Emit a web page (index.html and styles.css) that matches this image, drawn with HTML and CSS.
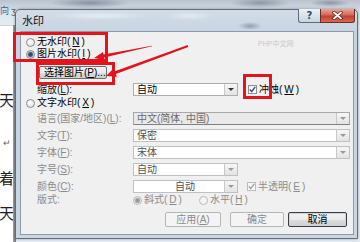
FILE: index.html
```html
<!DOCTYPE html>
<html lang="zh-CN">
<head>
<meta charset="utf-8">
<title>水印</title>
<link rel="stylesheet" href="styles.css">
</head>
<body>
<div class="app">
  <div class="ribbon">
    <span class="rb-text">向</span><span class="rb-glyph">ʒ</span>
  </div>
  <div class="doc">
    <div class="margin">
      <span class="ch c1">天</span>
      <span class="ch c2">↵</span>
      <span class="ch c3">着</span>
      <span class="ch c4">天</span>
    </div>
    <div class="edge"></div>
    <div class="behind"></div>
  </div>
</div>

<div class="dialog">
  <div class="titlebar">
    <span class="title">水印</span>
    <div class="caption">
      <span class="cap help">?</span>
      <span class="cap close">
        <svg width="11" height="9" viewBox="0 0 11 9">
          <path d="M2 1.5 L9 7.5 M9 1.5 L2 7.5" stroke="#5b2320" stroke-width="3.4" stroke-linecap="round"/>
          <path d="M2 1.5 L9 7.5 M9 1.5 L2 7.5" stroke="#ffffff" stroke-width="1.9" stroke-linecap="round"/>
        </svg>
      </span>
    </div>
  </div>
  <div class="client">
    <span class="wm">PHP中文网</span>
    <label class="opt r1"><span class="radio"></span>无水印(<u>N</u>)</label>
    <label class="opt r2"><span class="radio on"></span>图片水印(<u>I</u>)</label>
    <span class="btn pick">选择图片(<u>P</u>)...</span>
    <div class="form pic-form">
      <span class="lbl en">缩放(<u>L</u>):</span>
      <div class="ctl">
        <span class="combo narrow"><span class="val">自动</span><span class="arr"></span></span>
        <label class="chk"><span class="box"><svg width="7" height="7" viewBox="0 0 7 7"><path d="M0.8 3.6 L2.7 5.6 L6.2 0.9" fill="none" stroke="#2d4f8e" stroke-width="1.4"/></svg></span>冲蚀(<u>W</u>)</label>
      </div>
    </div>
    <label class="opt r3"><span class="radio"></span>文字水印(<u>X</u>)</label>
    <div class="form text-form">
      <span class="lbl">语言(国家/地区)(<u>L</u>):</span>
      <div class="ctl"><span class="combo wide lang"><span class="val">中文(简体, 中国)</span><span class="arr"></span></span></div>
      <span class="lbl">文字(<u>T</u>):</span>
      <div class="ctl"><span class="combo wide dis"><span class="val">保密</span><span class="arr"></span></span></div>
      <span class="lbl">字体(<u>F</u>):</span>
      <div class="ctl"><span class="combo wide dis"><span class="val">宋体</span><span class="arr"></span></span></div>
      <span class="lbl">字号(<u>S</u>):</span>
      <div class="ctl"><span class="combo narrow dis"><span class="val">自动</span><span class="arr"></span></span></div>
      <span class="lbl">颜色(<u>C</u>):</span>
      <div class="ctl">
        <span class="combo narrow dis"><span class="val center">自动</span><span class="arr"></span></span>
        <label class="chk dis"><span class="box"><svg width="7" height="7" viewBox="0 0 7 7"><path d="M0.8 3.6 L2.7 5.6 L6.2 0.9" fill="none" stroke="#a3a3a3" stroke-width="1.4"/></svg></span>半透明(<u>E</u>)</label>
      </div>
    </div>
    <div class="form lay">
      <span class="lbl">版式:</span>
      <div class="ctl">
        <label class="opt dis"><span class="radio on dis"></span>斜式(<u>D</u>)</label>
        <label class="opt dis horiz"><span class="radio dis"></span>水平(<u>H</u>)</label>
      </div>
    </div>
    <div class="actions">
      <span class="btn dis apply">应用(<u>A</u>)</span>
      <span class="btn dis ok">确定</span>
      <span class="btn def cancel">取消</span>
    </div>
  </div>
</div>

<svg class="annot" width="360" height="242" viewBox="0 0 360 242">
  <g fill="none" stroke="#e2141d" stroke-width="3">
    <rect x="14.5" y="33.5" width="92" height="27"/>
    <rect x="37.5" y="63.5" width="76" height="20"/>
    <rect x="244.5" y="75.5" width="26" height="22"/>
  </g>
  <g fill="#e2141d">
    <polygon points="94,58 103,52.1 103.5,54.5 151.9,45.7 152.1,46.3 104.1,57.5 104.6,59.9"/>
    <polygon points="106,76 113.8,68.3 114.9,71.2 187.7,45.1 188.3,46.9 115.9,74 116.9,76.8"/>
  </g>
</svg>
</body>
</html>
```

FILE: styles.css
```css
* { box-sizing: border-box; }
html, body { margin: 0; padding: 0; }
body {
  width: 360px;
  height: 242px;
  overflow: hidden;
  position: relative;
  font-family: "Liberation Sans", "Noto Sans CJK SC", sans-serif;
  font-size: 10px;
  color: #000;
  background: #fff;
}
u { text-decoration: underline; text-underline-offset: 1px; text-decoration-thickness: 1px; }
label { cursor: default; }

/* background word window */
.app { display: grid; grid-template-rows: 25px 1fr; height: 242px; }
.ribbon {
  display: flex;
  align-items: flex-start;
  gap: 2px;
  padding-top: 6px;
  background:
    radial-gradient(ellipse 40px 5px at 90px 3px, rgba(90,100,115,.55), rgba(90,100,115,0)),
    radial-gradient(ellipse 30px 5px at 260px 3px, rgba(90,100,115,.5), rgba(90,100,115,0)),
    radial-gradient(ellipse 20px 4px at 330px 3px, rgba(90,100,115,.5), rgba(90,100,115,0)),
    linear-gradient(#b9c3cf 0, #cdd6e0 8px, #dde5ee 12px, #e4ebf3);
}
.rb-text { font-family: "Noto Sans CJK SC", sans-serif; font-size: 9px; line-height: 10px; color: #3f5f8f; }
.rb-glyph { font-size: 9px; line-height: 10px; color: #555; }
.doc { display: flex; min-height: 0; }
.margin {
  width: 13px;
  background: #fff;
  display: flex;
  flex-direction: column;
  overflow: hidden;
  border-top: 1px solid #c9d1db;
}
.ch { font-family: "Noto Sans CJK SC", sans-serif; font-size: 15px; line-height: 16px; height: 16px; margin-left: -1px; color: #1e1e1e; }
.c1 { margin-top: 66px; }
.c2 { margin-top: 27px; font-size: 9px; color: #666; padding-left: 4px; }
.c3 { margin-top: 19px; }
.c4 { margin-top: 19px; }
.edge { width: 3px; background: linear-gradient(to right, #a3a8ae, #6f757c); }
.behind { flex: 1; background: #e8eef5; }

/* dialog window */
.dialog {
  position: absolute;
  left: 15px;
  top: 9px;
  width: 343px;
  height: 230px;
  border: 1px solid #5f6d7d;
  border-radius: 5px 5px 0 0;
  background: linear-gradient(#d3dde8, #c6d3e0 24px, #cad6e2);
  padding: 0 3px 3px 4px;
  display: flex;
  flex-direction: column;
  box-shadow: 0 0 3px rgba(0,0,0,.35);
}
.titlebar {
  height: 21px;
  flex: none;
  display: flex;
  align-items: flex-start;
  justify-content: space-between;
  background:
    radial-gradient(ellipse 50px 4px at 80px 6px, rgba(235,240,246,.8), rgba(235,240,246,0)),
    radial-gradient(ellipse 25px 4px at 170px 6px, rgba(235,240,246,.7), rgba(235,240,246,0)),
    radial-gradient(ellipse 12px 4px at 230px 16px, rgba(80,90,105,.45), rgba(80,90,105,0));
}
.title { font-family: "Noto Sans CJK SC", sans-serif; font-size: 11px; line-height: 12px; margin: 4px 0 0 2px; color: #111; }
.caption { display: flex; margin: -1px -1px 0 0; }
.cap {
  height: 14px;
  display: flex;
  align-items: center;
  justify-content: center;
  border: 1px solid #5e6b7a;
  border-top: none;
}
.help {
  width: 22px;
  border-radius: 0 0 0 3px;
  border-right: none;
  background: linear-gradient(#eef2f6, #dae3ec 50%, #c9d5e1);
  color: #2e4a70;
  font-family: "DejaVu Sans", sans-serif;
  font-weight: bold;
  font-size: 10px;
  line-height: 12px;
}
.close {
  width: 35px;
  border-radius: 0 0 3px 0;
  border-color: #6b2a26;
  background: linear-gradient(#e9a596, #d46a5a 45%, #c2402f 55%, #d86a56);
}

.client {
  flex: 1;
  position: relative;
  background: #f0f0f0;
  border: 1px solid #8d9aab;
  padding: 4px 3px 0 5px;
  display: flex;
  flex-direction: column;
  align-items: flex-start;
}
.wm {
  position: absolute;
  left: 237px;
  top: 8px;
  font-size: 7px;
  line-height: 8px;
  color: #c9c9c9;
}

.opt {
  display: flex;
  align-items: center;
  gap: 2px;
  height: 12px;
  line-height: 12px;
  white-space: nowrap;
}
.radio {
  width: 9px;
  height: 9px;
  border-radius: 50%;
  border: 1px solid #8a8a8a;
  background: radial-gradient(circle at 40% 35%, #ffffff, #dcdcdc);
  flex: none;
}
.radio.on { background: radial-gradient(circle, #2c4b70 0 1.8px, #8ea2b6 2.6px, #e6e6e6 3.4px); }
.radio.dis { border-color: #b9b9b9; background: #f4f4f4; }
.radio.on.dis { background: radial-gradient(circle, #9a9a9a 0 1.8px, #c9c9c9 2.6px, #f2f2f2 3.4px); }
.opt.dis { color: #8b8b8b; }

.btn {
  display: flex;
  align-items: center;
  justify-content: center;
  height: 15px;
  border: 1px solid #707070;
  border-radius: 2px;
  background: linear-gradient(#f2f2f2, #ebebeb 50%, #dddddd 51%, #cfcfcf);
  line-height: 12px;
  white-space: nowrap;
}
.btn.pick {
  margin: 6px 0 0 13px;
  width: 68px;
  height: 13px;
  justify-content: flex-start;
  padding-left: 4px;
}
.btn.dis {
  border-color: #b3b7ba;
  background: #f4f4f4;
  color: #8a8a8a;
}
.btn.def { border-color: #3b3b3b; box-shadow: inset 0 0 0 1px #c8d7e6; }

.form {
  display: grid;
  grid-template-columns: 96px 217px;
  grid-auto-rows: 13px;
  row-gap: 4px;
  margin-left: 11px;
}
.pic-form { margin-top: 4px; }
.r3 { margin-top: 1px; }
.text-form { margin-top: 3px; }
.lay { margin-top: 2px; grid-auto-rows: 10px; }
.lbl {
  line-height: 13px;
  white-space: nowrap;
  color: #8b8b8b;
}
.lay .lbl { line-height: 10px; }
.lbl.en { color: #111; }
.ctl { display: flex; align-items: center; }
.lay .ctl { height: 10px; }
.horiz { margin-left: 17px; }

.combo {
  display: flex;
  height: 13px;
  border: 1px solid #abadb3;
  background: #fff;
  flex: none;
}
.combo.wide { width: 217px; }
.combo.narrow { width: 105px; }
.combo.dis { border-color: #bdc0c4; color: #505050; }
.combo.lang { border-color: #a4a7ab; border-bottom-color: #7d8085; background: #e9e9e9; color: #6a6a6a; }
.val {
  flex: 1;
  padding-left: 3px;
  line-height: 11px;
  white-space: nowrap;
}
.val.center { text-align: center; padding-left: 12px; }
.arr {
  width: 13px;
  flex: none;
  border-left: 1px solid #c8c8c8;
  background: linear-gradient(#f6f6f6, #e3e3e3);
  display: flex;
  align-items: center;
  justify-content: center;
}
.arr::after {
  content: "";
  border-left: 3px solid transparent;
  border-right: 3px solid transparent;
  border-top: 3px solid #333;
}
.combo.dis .arr::after, .combo.lang .arr::after { border-top-color: #9a9a9a; }

.chk {
  display: flex;
  align-items: center;
  gap: 2px;
  margin-left: 10px;
  line-height: 12px;
  white-space: nowrap;
}
.chk.dis { margin-left: 9px; color: #8b8b8b; }
.box {
  width: 9px;
  height: 9px;
  border: 1px solid #8e8f8f;
  background: linear-gradient(#f4f4f4, #ffffff);
  display: flex;
  align-items: center;
  justify-content: center;
  flex: none;
}
.chk.dis .box { border-color: #bcbcbc; }

.actions {
  display: flex;
  align-self: flex-end;
  margin-top: 7px;
  margin-right: 3px;
}
.apply { width: 56px; }
.ok { width: 54px; margin-left: 9px; }
.cancel { width: 59px; margin-left: 4px; }

.annot {
  position: absolute;
  left: 0;
  top: 0;
  pointer-events: none;
}
```
